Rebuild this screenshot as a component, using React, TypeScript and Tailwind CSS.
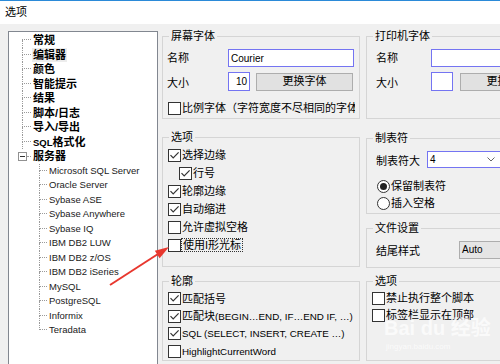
import React from 'react';

const Check: React.FC<{ checked?: boolean }> = ({ checked }) => (
  <span className="w-[13px] h-[13px] border border-[#333] bg-white flex items-center justify-center shrink-0">
    {checked && (
      <svg width="11" height="11" viewBox="0 0 11 11">
        <path d="M1.5 5.2 L4.2 8 L9.6 2.4" fill="none" stroke="#333" strokeWidth="1.2" />
      </svg>
    )}
  </span>
);

const Radio: React.FC<{ checked?: boolean }> = ({ checked }) => (
  <span className="w-[13px] h-[13px] rounded-full border border-[#333] bg-white flex items-center justify-center shrink-0">
    {checked && <span className="w-[7px] h-[7px] rounded-full bg-[#222]" />}
  </span>
);

const Group: React.FC<{ title: string; className: string; children?: React.ReactNode }> = ({ title, className, children }) => (
  <fieldset className={`border border-[#d5d5d5] min-w-0 shrink-0 ${className}`}>
    <legend className="ml-[6px] px-[2px] leading-[14px] text-[11px]">{title}</legend>
    {children}
  </fieldset>
);

const topItems = ['常规', '编辑器', '颜色', '智能提示', '结果', '脚本/日志', '导入/导出'];
const servers = [
  'Microsoft SQL Server',
  'Oracle Server',
  'Sybase ASE',
  'Sybase Anywhere',
  'Sybase IQ',
  'IBM DB2 LUW',
  'IBM DB2 z/OS',
  'IBM DB2 iSeries',
  'MySQL',
  'PostgreSQL',
  'Informix',
  'Teradata',
];

const Gutter: React.FC<{ first?: boolean; last?: boolean; w: string }> = ({ first, last, w }) => (
  <div className={`${w} flex flex-col shrink-0`}>
    <div className={`h-1/2 border-b border-dotted border-[#9a9a9a] ${first ? '' : 'border-l'}`} />
    <div className={`h-1/2 border-dotted border-[#9a9a9a] ${last ? '' : 'border-l'}`} />
  </div>
);

const Tree: React.FC = () => (
  <div className="mt-[7px] w-[150px] h-[340px] bg-white border border-[#828790] pt-[1px] shrink-0">
    {topItems.map((t, i) => (
      <div key={t} className="flex h-[14.5px] pl-[13px]">
        <Gutter first={i === 0} w="w-[9px]" />
        <span className={`ml-[1px] px-[1px] font-bold text-[11px] leading-[14.5px] ${i === 1 ? 'bg-[#ececec]' : ''}`}>{t}</span>
      </div>
    ))}
    <div className="flex h-[14.5px] pl-[13px]">
      <Gutter w="w-[9px]" />
      <span className="ml-[1px] px-[1px] font-bold text-[11px] leading-[14.5px]">
        <span className="text-[9.5px]">SQL</span>格式化
      </span>
    </div>
    <div className="flex h-[14.5px] items-center pl-[9px]">
      <span className="w-[9px] h-[9px] border border-[#919191] bg-white flex items-center justify-center shrink-0">
        <span className="w-[5px] h-px bg-[#333]" />
      </span>
      <span className="w-[4px] border-b border-dotted border-[#9a9a9a]" />
      <span className="ml-[1px] px-[1px] font-bold text-[11px] leading-[14.5px]">服务器</span>
    </div>
    {servers.map((s, i) => (
      <div key={s} className="flex h-[14.5px] pl-[30px]">
        <Gutter last={i === servers.length - 1} w="w-[8px]" />
        <span className="ml-[2px] text-[9.5px] leading-[14.5px] text-[#1a1a1a] whitespace-nowrap">{s}</span>
      </div>
    ))}
  </div>
);

const CheckRow: React.FC<{ checked?: boolean; h: string; pl: string; children: React.ReactNode }> = ({ checked, h, pl, children }) => (
  <div className={`flex items-center whitespace-nowrap ${h} ${pl}`}>
    <Check checked={checked} />
    <span className="ml-[1px]">{children}</span>
  </div>
);

export default function App() {
  return (
    <div className="relative w-[500px] h-[364px] overflow-hidden bg-[#f0f0f0] text-[11px] text-black font-['Liberation_Sans','Noto_Sans_CJK_SC',sans-serif]">
      <div className="h-[24px] bg-white border-t border-[#2b8ad8] flex items-center pl-[5px]">选项</div>

      <div className="flex pl-[8px]">
        <Tree />

        <div className="ml-[4px] mt-[5px] flex gap-[6px]">
          {/* left column */}
          <div className="flex flex-col w-[198px] shrink-0">
            <Group title="屏幕字体" className="h-[90px]">
              <div className="flex items-center mt-[6px] pl-[4px] h-[18px]">
                <span className="w-[61px]">名称</span>
                <div className="w-[126px] h-[18px] border border-[#7474f2] bg-white flex items-center px-[2px] text-[10px]">Courier</div>
              </div>
              <div className="flex items-center mt-[5px] pl-[4px] h-[19px]">
                <span className="w-[61px] pt-[4px]">大小</span>
                <div className="w-[22px] h-[19px] border border-[#7474f2] bg-white flex items-center justify-end pr-[2px] text-[10px]">10</div>
                <button className="ml-[6px] w-[97px] h-[18px] bg-[#e1e1e1] border border-[#adadad] text-[11px] leading-none">更换字体</button>
              </div>
              <div className="flex items-center mt-[10px] pl-[5px] h-[14px] w-[192px] overflow-hidden whitespace-nowrap">
                <Check />
                <span className="ml-[1px]">比例字体（字符宽度不尽相同的字体）</span>
              </div>
            </Group>

            <Group title="选项" className="h-[137px] mt-[11px]">
              <div className="mt-[2px]">
                <CheckRow checked h="h-[18px]" pl="pl-[5px]">选择边缘</CheckRow>
                <CheckRow checked h="h-[18px]" pl="pl-[16px]">行号</CheckRow>
                <CheckRow checked h="h-[18px]" pl="pl-[5px]">轮廓边缘</CheckRow>
                <CheckRow checked h="h-[18px]" pl="pl-[5px]">自动缩进</CheckRow>
                <CheckRow h="h-[18px]" pl="pl-[5px]">允许虚拟空格</CheckRow>
                <div className="flex items-center h-[18px] pl-[5px] whitespace-nowrap">
                  <Check />
                  <span className="border border-dotted border-[#333] px-[1px] leading-[12px]">使用I形光标</span>
                </div>
              </div>
            </Group>

            <Group title="轮廓" className="h-[87px] mt-[7px]">
              <div className="mt-[2px]">
                <CheckRow checked h="h-[17.5px]" pl="pl-[5px]">匹配括号</CheckRow>
                <CheckRow checked h="h-[17.5px]" pl="pl-[5px]">
                  匹配块<span className="text-[9.8px]">(BEGIN…END, IF…END IF, …)</span>
                </CheckRow>
                <CheckRow checked h="h-[17.5px]" pl="pl-[5px]">
                  <span className="text-[9.8px]">SQL (SELECT, INSERT, CREATE …)</span>
                </CheckRow>
                <CheckRow h="h-[17.5px]" pl="pl-[5px]">
                  <span className="text-[9.8px]">HighlightCurrentWord</span>
                </CheckRow>
              </div>
            </Group>
          </div>

          {/* right column */}
          <div className="flex flex-col w-[197px] shrink-0">
            <Group title="打印机字体" className="h-[90px]">
              <div className="flex items-center mt-[6px] pl-[9px] h-[18px]">
                <span className="w-[55px]">名称</span>
                <div className="w-[126px] h-[18px] border border-[#7474f2] bg-white" />
              </div>
              <div className="flex items-center mt-[5px] pl-[9px] h-[19px]">
                <span className="w-[55px] pt-[4px]">大小</span>
                <div className="w-[22px] h-[19px] border border-[#7474f2] bg-white" />
                <button className="ml-[7px] w-[97px] h-[18px] bg-[#e1e1e1] border border-[#adadad] text-[11px] leading-none">更换字体</button>
              </div>
            </Group>

            <Group title="制表符" className="h-[83px] mt-[12px]">
              <div className="flex items-center mt-[6px] pl-[9px] h-[17px]">
                <span className="w-[51px] pt-[4px]">制表符大</span>
                <div className="w-[74px] h-[17px] border border-[#7474f2] bg-white flex items-center justify-between pl-[2px] pr-[5px] text-[10px]">
                  4
                  <svg width="8" height="5" viewBox="0 0 8 5">
                    <path d="M0.5 0.5 L4 4 L7.5 0.5" fill="none" stroke="#666" strokeWidth="1" />
                  </svg>
                </div>
              </div>
              <div className="mt-[10px] pl-[10px]">
                <div className="flex items-center h-[17px]">
                  <Radio checked />
                  <span className="ml-[1px]">保留制表符</span>
                </div>
                <div className="flex items-center h-[17px]">
                  <Radio />
                  <span className="ml-[1px]">插入空格</span>
                </div>
              </div>
            </Group>

            <Group title="文件设置" className="h-[47px] mt-[7px]">
              <div className="flex items-center mt-[6px] pl-[9px] h-[17px]">
                <span className="w-[83px] pt-[3px]">结尾样式</span>
                <div className="w-[80px] h-[18px] border border-[#adadad] bg-[#e5e5e5] flex items-center pl-[2px] text-[10px]">Auto</div>
              </div>
            </Group>

            <Group title="选项" className="h-[87px] mt-[6px]">
              <div className="mt-[2px]">
                <CheckRow h="h-[17px]" pl="pl-[5px]">禁止执行整个脚本</CheckRow>
                <CheckRow h="h-[17px]" pl="pl-[5px]">标签栏显示在顶部</CheckRow>
              </div>
            </Group>
          </div>
        </div>
      </div>

      {/* watermark */}
      <div className="absolute left-[384px] top-[318px] text-[20px] font-bold leading-none text-white/70 whitespace-nowrap pointer-events-none">
        Bai du 经验
      </div>
      <div className="absolute left-[386px] top-[343px] text-[8px] leading-none text-white/70 whitespace-nowrap pointer-events-none">
        jingyan.baidu.com
      </div>

      {/* annotation arrow */}
      <svg className="absolute left-0 top-0 pointer-events-none" width="500" height="364">
        <line x1="110" y1="285" x2="158" y2="254" stroke="#e8372e" strokeWidth="2" />
        <polygon points="169,247 159.6,258.3 154.8,250.7" fill="#e8372e" />
      </svg>
    </div>
  );
}
